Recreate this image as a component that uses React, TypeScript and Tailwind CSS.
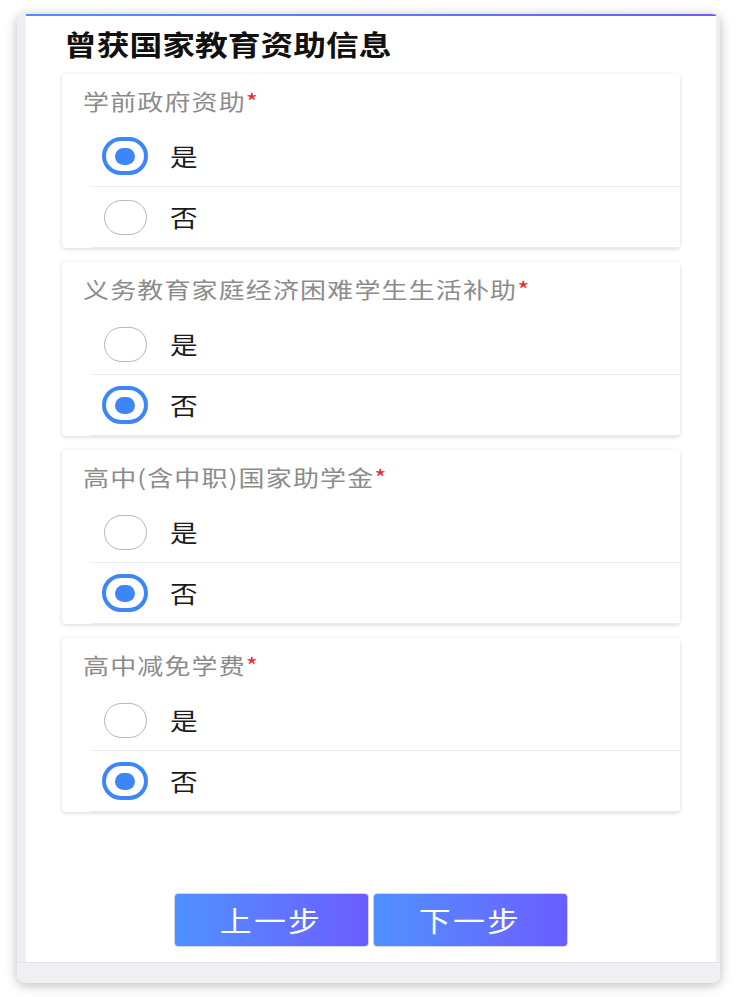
const cjk = { fontFamily: '"Noto Sans CJK SC", "Noto Sans", sans-serif' };

type Question = {
  label: string;
  value: "yes" | "no";
};

const questions: Question[] = [
  { label: "学前政府资助", value: "yes" },
  { label: "义务教育家庭经济困难学生生活补助", value: "no" },
  { label: "高中(含中职)国家助学金", value: "no" },
  { label: "高中减免学费", value: "no" },
];

function Radio({ checked }: { checked: boolean }) {
  return (
    <div className="flex h-[38px] w-[46px] items-center justify-center">
      {checked ? (
        <div className="flex h-[38px] w-[46px] items-center justify-center rounded-full border-[4px] border-[#3d86f8] bg-white">
          <div className="h-[17px] w-[20px] rounded-full bg-[#3d86f8]" />
        </div>
      ) : (
        <div className="h-[35px] w-[43px] rounded-full border-[1.5px] border-[#b4b6bb] bg-white" />
      )}
    </div>
  );
}

function OptionRow({ text, checked }: { text: string; checked: boolean }) {
  return (
    <div className="ml-[28px] flex h-[61px] items-center border-b border-[#ebedf0] pl-[12px]">
      <Radio checked={checked} />
      <span className="ml-[22px] inline-block origin-left scale-x-[1.15] text-[24px] leading-[24px] text-[#1a1a1a]">
        {text}
      </span>
    </div>
  );
}

function QuestionCard({ q }: { q: Question }) {
  return (
    <section className="w-[618px] rounded-[4px] bg-white shadow-[0_1px_4px_rgba(0,0,0,0.16)]">
      <div className="pl-[21px] pt-[15px] pb-[15px]">
        <h3 className="origin-left scale-x-[1.18] whitespace-nowrap text-[22px] leading-[22px] tracking-[1px] text-[#8c8c8c]">
          {q.label}
          <span className="text-[#ee2a2a]">*</span>
        </h3>
      </div>
      <OptionRow text="是" checked={q.value === "yes"} />
      <OptionRow text="否" checked={q.value === "no"} />
    </section>
  );
}

function StepButton({ children }: { children: string }) {
  return (
    <button className="flex h-[54px] w-[195px] items-center justify-center rounded-[4px] border border-[#d3d5e0] bg-linear-to-r from-[#4e90ff] to-[#6a5cff] text-white">
      <span className="inline-block scale-x-[1.14] text-[28px] leading-[28px] tracking-[2px]">{children}</span>
    </button>
  );
}

export default function App() {
  return (
    <div className="h-[997px] w-[738px] overflow-hidden bg-white pl-[17px] pt-[14px]" style={cjk}>
      <div className="flex h-[969px] w-[703px] flex-col overflow-hidden rounded-[8px] bg-[#efeff3] shadow-[0_2px_12px_rgba(0,0,0,0.28)]">
        <div className="ml-[9px] mr-[4px] flex h-[948px] flex-col bg-white">
          <div className="h-[2px] bg-linear-to-r from-[#4e90ff] to-[#6a5cff]" />
          <h2 className="mt-[14px] ml-[38px] block w-max origin-left scale-x-[1.17] text-[28px] font-bold leading-[29px] text-[#111]">
            曾获国家教育资助信息
          </h2>
          <div className="mt-[15px] flex flex-col gap-[14px] pl-[36px]">
            {questions.map((q) => (
              <QuestionCard key={q.label} q={q} />
            ))}
          </div>
          <div className="mt-[81px] flex justify-center gap-[4px]">
            <StepButton>上一步</StepButton>
            <StepButton>下一步</StepButton>
          </div>
        </div>
        <div className="h-[21px] border-t border-[#e2e2e8] bg-[#efeff4]" />
      </div>
    </div>
  );
}
